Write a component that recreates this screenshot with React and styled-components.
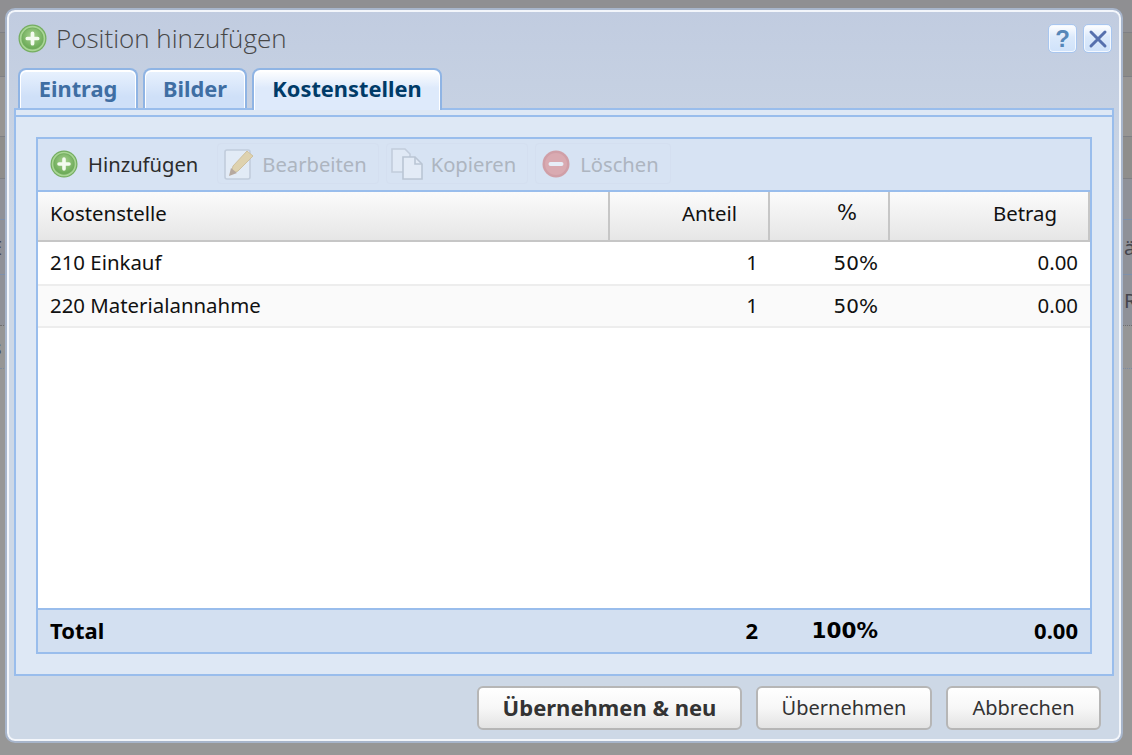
import React from "react";
import styled, { createGlobalStyle } from "styled-components";

const GlobalStyle = createGlobalStyle`
  html, body {
    margin: 0;
    height: 100%;
    overflow: hidden;
    background: #979797;
    font-family: "Noto Sans", "Open Sans", sans-serif;
  }
  #root {
    height: 100%;
  }
`;

const Page = styled.div`
  position: relative;
  width: 1132px;
  height: 755px;
  overflow: hidden;
  background: #979797;
`;

const BackRow = styled.div`
  box-sizing: border-box;
  height: ${(p) => p.$h}px;
  display: grid;
  grid-template-columns: 1124px 1fr;
  align-items: center;
  border-bottom: 1px ${(p) => p.$line || "solid #7f8084"};
  background: ${(p) => p.$bg};
  color: #45454d;
  font-size: 20px;
  white-space: nowrap;
  overflow: hidden;
`;

const BackLeftText = styled.span`
  margin-left: ${(p) => p.$x || 0}px;
`;

const Dialog = styled.div`
  position: absolute;
  left: 5px;
  top: 8px;
  width: 1118px;
  height: 735px;
  box-sizing: border-box;
  display: flex;
  flex-direction: column;
  padding: 0 7px;
  border: 2px solid #a7b5cb;
  border-radius: 10px;
  box-shadow: inset 0 0 0 2px #f3f6fb;
  background: linear-gradient(180deg, #c1cce0 0%, #cdd8e6 30%, #cdd8e6 100%);
`;

const TitleBar = styled.div`
  box-sizing: border-box;
  height: 58px;
  flex: none;
  display: flex;
  align-items: center;
  padding: 0 2px 1px 4px;
`;

const Title = styled.div`
  flex: 1;
  margin: 0 0 2px 9px;
  font-family: "Open Sans", sans-serif;
  font-weight: 300;
  font-size: 26px;
  color: #474747;
`;

const WinButton = styled.button`
  box-sizing: border-box;
  width: 29px;
  height: 29px;
  margin-left: 6px;
  padding: 0;
  display: flex;
  align-items: center;
  justify-content: center;
  border: 1px solid #a8c6ef;
  border-radius: 5px;
  box-shadow: inset 0 0 0 1px #f3f8ff;
  background: linear-gradient(180deg, #ffffff 0%, #dbe9fb 45%, #cfe2fa 100%);
  font-family: "Liberation Sans", sans-serif;
  font-weight: 700;
  font-size: 24px;
  color: #5587b8;
`;

const Tabs = styled.div`
  height: 40px;
  flex: none;
  display: flex;
  padding-left: 4px;
  gap: 5px;
  position: relative;
  z-index: 1;
`;

const Tab = styled.div`
  box-sizing: border-box;
  width: ${(p) => p.$w}px;
  height: ${(p) => (p.$active ? 42 : 40)}px;
  display: flex;
  align-items: center;
  justify-content: center;
  padding-bottom: ${(p) => (p.$active ? 3 : 1)}px;
  border: 2px solid #8fb4e4;
  border-bottom: none;
  border-radius: 8px 8px 0 0;
  box-shadow: inset 0 1px 0 1px #ffffff;
  background: ${(p) => p.$active
    ? "linear-gradient(180deg, #ffffff 0%, #deeafb 45%, #deeafb 100%)"
    : "linear-gradient(180deg, #e9f2fe 0%, #cfe0f8 70%, #cfe0f8 100%)"};
  font-size: 21.8px;
  font-weight: 700;
  color: ${(p) => (p.$active ? "#003b68" : "#3f6ea3")};
`;

const Panel = styled.div`
  box-sizing: border-box;
  height: 568px;
  flex: none;
  display: flex;
  flex-direction: column;
  border: 2px solid #99bdec;
  background: #dee8f5;
`;

const PanelStrip = styled.div`
  height: 5px;
  flex: none;
  border-bottom: 2px solid #99bdec;
`;

const PanelBody = styled.div`
  flex: 1;
  min-height: 0;
  padding: 20px;
  display: flex;
`;

const Grid = styled.div`
  box-sizing: border-box;
  flex: 1;
  display: flex;
  flex-direction: column;
  border: 2px solid #99bdec;
  background: #fff;
  color: #111;
  font-size: 20.4px;
`;

const Toolbar = styled.div`
  box-sizing: border-box;
  height: 53px;
  flex: none;
  display: flex;
  align-items: center;
  padding: 0 0 2px 5px;
  gap: 7px;
  background: #d7e3f3;
  border-bottom: 2px solid #99bdec;
`;

const ToolButton = styled.div`
  box-sizing: border-box;
  height: 41px;
  display: flex;
  align-items: center;
  gap: ${(p) => p.$gap || 8}px;
  padding: 0 11px 0 ${(p) => p.$lead || 6}px;
  border-radius: 4px;
  border: 1px solid ${(p) => (p.$disabled ? "#d4dff0" : "transparent")};
  color: ${(p) => (p.$disabled ? "#adb5c0" : "#2c2c2c")};
  font-size: 20.2px;
`;

const IconWrap = styled.span`
  display: flex;
  opacity: ${(p) => (p.$disabled ? 0.42 : 1)};
`;

const Row = styled.div`
  box-sizing: border-box;
  display: grid;
  grid-template-columns: 572px 160px 120px 200px;
  flex: none;
  height: ${(p) => p.$h}px;
  align-items: center;
  background: ${(p) => p.$bg || "transparent"};
  border-bottom: ${(p) => (p.$line ? `2px solid ${p.$line}` : "none")};
`;

const TotalRow = styled(Row)`
  border-top: 2px solid #99bdec;
  font-size: 22px;
  font-weight: 700;
  color: #000;
`;

const HeadCell = styled.div`
  box-sizing: border-box;
  height: 100%;
  display: flex;
  align-items: center;
  justify-content: ${(p) => (p.$right ? "flex-end" : "flex-start")};
  padding: 0 ${(p) => (p.$right ? 31 : 12)}px 6px 12px;
  border-right: 2px solid #c6c6c6;
  font-family: ${(p) => (p.$pct ? '"DejaVu Sans", sans-serif' : "inherit")};
  font-size: ${(p) => (p.$pct ? "21px" : "inherit")};
`;

const Cell = styled.div`
  text-align: ${(p) => (p.$right ? "right" : "left")};
  padding: 0 12px ${(p) => (p.$pct ? 1 : 3)}px;
  font-family: ${(p) => (p.$pct ? '"DejaVu Sans", sans-serif' : "inherit")};
  font-size: ${(p) => (p.$pct ? `${p.$pct}px` : "inherit")};
`;

const Spacer = styled.div`
  flex: 1;
  background: #fff;
`;

const Footer = styled.div`
  flex: 1;
  display: flex;
  align-items: center;
  justify-content: flex-end;
  gap: 14px;
  padding: 0 13px 1px 0;
`;

const Button = styled.button`
  box-sizing: border-box;
  width: ${(p) => p.$w}px;
  height: 44px;
  padding: 0 0 2px;
  border: 2px solid #b6b6b6;
  border-radius: 6px;
  background: linear-gradient(180deg, #ffffff 0%, #f7f7f7 50%, #e3e3e3 100%);
  font-family: "Noto Sans", sans-serif;
  font-size: ${(p) => (p.$primary ? 22 : 20)}px;
  font-weight: ${(p) => (p.$primary ? 700 : 400)};
  color: #333;
`;

const AddIcon = ({ size = 28, id }) => (
  <svg width={size} height={size} viewBox="0 0 28 28">
    <defs>
      <radialGradient id={id} cx="50%" cy="38%" r="62%">
        <stop offset="0%" stopColor="#a8d290" />
        <stop offset="100%" stopColor="#69a955" />
      </radialGradient>
    </defs>
    <circle cx="14" cy="14" r="13.5" fill="#74ad60" />
    <circle cx="14" cy="14" r="11.5" fill="none" stroke="#a9d695" strokeWidth="1.6" />
    <circle cx="14" cy="14" r="10" fill={`url(#${id})`} />
    <path d="M14 9v10M9 14h10" stroke="#f4fbef" strokeWidth="3.6" strokeLinecap="round" />
  </svg>
);

const RemoveIcon = () => (
  <svg width="28" height="28" viewBox="0 0 28 28">
    <circle cx="14" cy="14" r="13.5" fill="#c8433f" />
    <circle cx="14" cy="14" r="11" fill="#dd5c58" />
    <path d="M8.5 14h11" stroke="#fff" strokeWidth="4" strokeLinecap="round" />
  </svg>
);

const EditIcon = () => (
  <svg width="30" height="32" viewBox="0 0 30 32">
    <rect x="1" y="2" width="25" height="29" rx="2" fill="#f3f6fb" stroke="#a5afbe" strokeWidth="1.6" />
    <path d="M9 18 23 3l6 5-15 15-7 3z" fill="#e9bd52" stroke="#c2922d" strokeWidth="1" />
    <path d="M5 28l2-8 6 5z" fill="#8a5a2c" />
  </svg>
);

const CopyIcon = () => (
  <svg width="32" height="32" viewBox="0 0 32 32">
    <path d="M1 1h13l5 5v18H1z" fill="#eef3fa" stroke="#a7b0bd" strokeWidth="1.6" />
    <path d="M12 9h12l7 7v15H12z" fill="#f5f8fc" stroke="#939dab" strokeWidth="1.6" />
    <path d="M24 9v7h7" fill="none" stroke="#939dab" strokeWidth="1.6" />
  </svg>
);

const CloseIcon = () => (
  <svg width="20" height="20" viewBox="0 0 20 20">
    <path d="M3 3l14 14M17 3 3 17" stroke="#5670ad" strokeWidth="3" strokeLinecap="round" />
  </svg>
);

const rows = [
  { name: "210 Einkauf", share: 1, pct: "50%", amount: "0.00", h: 44 },
  { name: "220 Materialannahme", share: 1, pct: "50%", amount: "0.00", h: 42 }
];

const App = () => {
  return (
    <Page>
      <GlobalStyle />
      <BackRow $h={33} $bg="#8f8f92" />
      <BackRow $h={44} $bg="#8c8b88" />
      <BackRow $h={60} $bg="#979593" />
      <BackRow $h={42} $bg="#8f8e8c" />
      <BackRow $h={41} $bg="#8f9198" $line="solid #7e90ab" />
      <BackRow $h={55} $bg="#8f9198" $line="solid #7e90ab">
        <BackLeftText $x={-9}>E</BackLeftText>
        <span>ä</span>
      </BackRow>
      <BackRow $h={51} $bg="#8f9198" $line="dotted #6f6f6f">
        <span />
        <span>R</span>
      </BackRow>
      <BackRow $h={43} $bg="#969696" $line="dotted #7c8aa0">
        <BackLeftText $x={-8}>s</BackLeftText>
      </BackRow>
      <Dialog>
        <TitleBar>
          <AddIcon size={29} id="addTitle" />
          <Title>Position hinzufügen</Title>
          <WinButton>?</WinButton>
          <WinButton><CloseIcon /></WinButton>
        </TitleBar>
        <Tabs>
          <Tab $w={120}>Eintrag</Tab>
          <Tab $w={104}>Bilder</Tab>
          <Tab $w={190} $active>Kostenstellen</Tab>
        </Tabs>
        <Panel>
          <PanelStrip />
          <PanelBody>
            <Grid>
              <Toolbar>
                <ToolButton $gap={10}>
                  <AddIcon id="addTool" />
                  Hinzufügen
                </ToolButton>
                <ToolButton $disabled>
                  <IconWrap $disabled><EditIcon /></IconWrap>
                  Bearbeiten
                </ToolButton>
                <ToolButton $disabled $lead={4}>
                  <IconWrap $disabled><CopyIcon /></IconWrap>
                  Kopieren
                </ToolButton>
                <ToolButton $disabled $gap={10}>
                  <IconWrap $disabled><RemoveIcon /></IconWrap>
                  Löschen
                </ToolButton>
              </Toolbar>
              <Row $h={50} $bg="linear-gradient(180deg, #fbfbfb 0%, #e6e6e6 100%)" $line="#c6c6c6">
                <HeadCell>Kostenstelle</HeadCell>
                <HeadCell $right>Anteil</HeadCell>
                <HeadCell $right $pct>%</HeadCell>
                <HeadCell $right>Betrag</HeadCell>
              </Row>
              {rows.map((row, index) => (
                <Row key={row.name} $h={row.h} $bg={index % 2 ? "#fafafa" : "#fff"} $line="#ededed">
                  <Cell>{row.name}</Cell>
                  <Cell $right>{row.share}</Cell>
                  <Cell $right $pct={20}>{row.pct}</Cell>
                  <Cell $right>{row.amount}</Cell>
                </Row>
              ))}
              <Spacer />
              <TotalRow $h={44} $bg="#d3e0f1">
                <Cell>Total</Cell>
                <Cell $right>2</Cell>
                <Cell $right $pct={21.5}>100%</Cell>
                <Cell $right>0.00</Cell>
              </TotalRow>
            </Grid>
          </PanelBody>
        </Panel>
        <Footer>
          <Button $w={265} $primary>Übernehmen &amp; neu</Button>
          <Button $w={176}>Übernehmen</Button>
          <Button $w={155}>Abbrechen</Button>
        </Footer>
      </Dialog>
    </Page>
  );
};

export default App;
